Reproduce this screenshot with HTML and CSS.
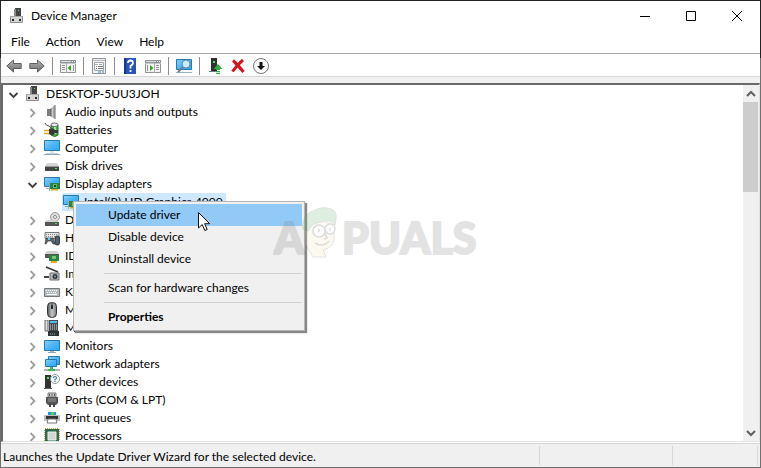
FILE: index.html
```html
<!DOCTYPE html>
<html lang="en">
<head>
<meta charset="UTF-8">
<meta name="viewport" content="width=device-width, initial-scale=1.0">
<title>Device Manager</title>
<link rel="stylesheet" href="styles.css">
</head>
<body>

<svg class="sprite" aria-hidden="true">
  <linearGradient id="blue" x1="0" y1="0" x2="1" y2="1"><stop offset="0" stop-color="#8ad2ff"/><stop offset=".5" stop-color="#4db5f8"/><stop offset="1" stop-color="#2fa2f0"/></linearGradient>
  <linearGradient id="metal" x1="0" y1="0" x2="1" y2="0"><stop offset="0" stop-color="#555"/><stop offset=".5" stop-color="#c4c8cb"/><stop offset="1" stop-color="#777"/></linearGradient>
  <linearGradient id="arrow" x1="0" y1="0" x2="0" y2="1"><stop offset="0" stop-color="#b5b5b5"/><stop offset="1" stop-color="#6c6c6c"/></linearGradient>
  <symbol id="open" viewBox="0 0 16 16"><path d="M4.500 7l4 4 4-4" fill="none" stroke="#404040" stroke-width="1.800"/></symbol>
  <symbol id="shut" viewBox="0 0 16 16"><path d="M6.500 5l4 4-4 4" fill="none" stroke="#a0a0a0" stroke-width="1.800"/></symbol>
  <symbol id="pc" viewBox="0 0 16 16"><path d="M6 0h6v9H6z" fill="#444"/><path d="M5 1h2v8H5z" fill="#888"/><path d="M9 2h1v1H9z" fill="#3f6"/><path d="M1.500 8.500h12v6h-12z" fill="#d6d6d6" stroke="#8c8c8c"/><path d="M1 8h13v1H1z" fill="#aaa"/><path d="M3 11h2v2H3zM10 11h2v2h-2z" fill="#222"/></symbol>
  <symbol id="speaker" viewBox="0 0 16 16"><path d="M3 5h3v7H3z" fill="#7a8083"/><path d="M6 5l5-4v14l-5-3z" fill="url(#metal)"/><path d="M11 1v14" stroke="#999" stroke-width="1.500"/></symbol>
  <symbol id="battery" viewBox="0 0 16 16"><path d="M7 3h7v10q-3 3-7 0z" fill="#42b549" stroke="#276b2c"/><ellipse cx="10.500" cy="2.800" rx="3.500" ry="1.800" fill="#e8eeee" stroke="#667"/><path d="M11 5v7" stroke="#9fea9c" stroke-width="2"/><path d="M1 1q1 3 4 3l3 3" fill="none" stroke="#555"/><path d="M5 7q4-2 6 1l3 0v3l-3 0q-2 4-6 1z" fill="#393939"/><path d="M0 8.500h5M0 11.500h5" stroke="#e6a51d" stroke-width="1.500"/></symbol>
  <symbol id="screen" viewBox="0 0 16 16"><path d="M.5 2.500h15v10H.5z" fill="url(#blue)" stroke="#2479ad"/><path d="M6 13h4v1H6z" fill="#a8b5bc"/><path d="M4 14.500h8" stroke="#8fa5b2"/></symbol>
  <symbol id="computer" viewBox="0 0 16 16"><path d="M.5.500h15v10H.5z" fill="url(#blue)" stroke="#2479ad"/><path d="M6 11h4v2H6z" fill="#dce5eb"/><path d="M0 14.500h16" stroke="#8ca5b8"/><path d="M2 13.500h12" stroke="#c8d5df"/></symbol>
  <symbol id="disk" viewBox="0 0 16 16"><path d="M3 5h10l2 3H1z" fill="#d6d6d6"/><path d="M1 8h14v5H1z" fill="#454545"/><path d="M1 8h14v1H1z" fill="#999"/><path d="M11 10h2v1h-2z" fill="#45ed60"/></symbol>
  <symbol id="display" viewBox="0 0 16 16"><path d="M.5 1.500h15v9H.5z" fill="url(#blue)" stroke="#2479ad"/><path d="M2 12.500h3" stroke="#8fa5b2"/><path d="M6 7h10v6H6z" fill="#298344"/><path d="M5.500 6v9" stroke="#9aa"/><path d="M9 8h4v4H9z" fill="#6ebb65"/><path d="M10 9h2v2h-2z" fill="#174924"/><path d="M7 13h7v1.500H7z" fill="#e2a82b"/></symbol>
  <symbol id="dvd" viewBox="0 0 16 16"><circle cx="11" cy="5" r="4.500" fill="#ddd" stroke="#9a9a9a"/><circle cx="11" cy="5" r="1.500" fill="#fff" stroke="#888"/><path d="M3 8h10l2 2H1z" fill="#d0d0d0"/><path d="M1 10h14v4H1z" fill="#555"/><path d="M11 11h2v1h-2z" fill="#3de357"/></symbol>
  <symbol id="hid" viewBox="0 0 16 16"><path d="M1 2.500h14v6H1z" fill="#e4e7e9" stroke="#777"/><path d="M2 4.500h12M2 6.500h12" stroke="#888" stroke-dasharray="1 1"/><path d="M1 14l1-6h7l2 6-2 0-2-3H4l-2 3z" fill="#56646f" stroke="#333" stroke-width=".6"/><path d="M4 8h2v2H4z" fill="#5ad1ff"/><rect x="11" y="6" width="4.500" height="9" rx="2" fill="#4c6070" stroke="#222" stroke-width=".8"/></symbol>
  <symbol id="ide" viewBox="0 0 16 16"><path d="M3 3h10l2 3H1z" fill="#d0d0d0"/><path d="M1 6h14v4H1z" fill="#555"/><path d="M5 7h10v6H5z" fill="#298344"/><path d="M8 8h4v3H8z" fill="#79c66d"/><path d="M7 13h6v2H7z" fill="#e2a82b"/></symbol>
  <symbol id="camera" viewBox="0 0 16 16"><path d="M2 1l12 5" stroke="#333" stroke-width="1.500"/><path d="M6 7h9v7H6z" fill="#b8bbbd" stroke="#6d6d6d"/><path d="M0 10h5v2H0z" fill="#444"/><circle cx="11" cy="10.500" r="2.500" fill="#2c343a"/><circle cx="11" cy="10.500" r="1" fill="#84a4b8"/></symbol>
  <symbol id="keyboard" viewBox="0 0 16 16"><path d="M.5 4.500h15v8H.5z" fill="#b4babd" stroke="#73797c"/><path d="M2 6.500h12M3 8.500h10" stroke="#fff" stroke-dasharray="1 1"/><path d="M3 10.500h10" stroke="#fff"/></symbol>
  <symbol id="mouse" viewBox="0 0 16 16"><rect x="3.500" y=".5" width="9" height="15" rx="4" fill="url(#metal)" stroke="#333"/><path d="M8 1v6" stroke="#23292f"/><rect x="7" y="3" width="2" height="4" rx="1" fill="#222"/></symbol>
  <symbol id="modem" viewBox="0 0 16 16"><path d="M1 0h3v11H1z" fill="#ddd" stroke="#666"/><path d="M5 0h9v12H5z" fill="#42484d"/><path d="M6 1h7v2H6z" fill="#50bdf5"/><path d="M6 5h7M6 7h7M6 9h7" stroke="#ddd" stroke-dasharray="1 1"/><path d="M4 11h11v5H4z" fill="#333"/><path d="M6 14h6" stroke="#5dcfd2" stroke-dasharray="1 1"/></symbol>
  <symbol id="network" viewBox="0 0 16 16"><path d="M4.500.500h11v8h-11z" fill="url(#blue)" stroke="#2479ad"/><path d="M1.500 3.500h11v7h-11z" fill="url(#blue)" stroke="#2479ad"/><path d="M0 14h16" stroke="#aeb6b9" stroke-width="2"/><path d="M6 11h3v2h2v2H4v-2h2z" fill="#42b954"/></symbol>
  <symbol id="other" viewBox="0 0 16 16"><path d="M1 1h6v14H1z" fill="#333"/><path d="M0 14h8v1H0z" fill="#666"/><path d="M3 3h2v2H3z" fill="#41f262"/><circle cx="11" cy="5" r="4.500" fill="#fff" stroke="#8a999f"/><path d="M9.500 4q0-1.500 1.500-1.500T12.500 4Q12.500 5 11 5.500v1M11 7v1" fill="none" stroke="#3978b2" stroke-width="1.200"/></symbol>
  <symbol id="port" viewBox="0 0 16 16"><path d="M4 1h8v4H4z" fill="#cfcfcf" stroke="#777"/><path d="M5.500 2v2M8 2v2M10.500 2v2" stroke="#555"/><path d="M2 5h12v6l-2 2H4l-2-2z" fill="#555"/><path d="M4 7h8M4 9h8" stroke="#999"/><path d="M5 12h2v3H5zM9 12h2v3H9z" fill="#444"/></symbol>
  <symbol id="printer" viewBox="0 0 16 16"><path d="M4 2h8v3H4z" fill="#2893e8"/><path d="M7 2h3v3H7z" fill="#5ac94a"/><path d="M0 5h16v6H0z" fill="#bbc0c3"/><path d="M2 6h12v3H2z" fill="#333"/><path d="M4 9h8l1 4H3z" fill="#fff" stroke="#777"/></symbol>
  <symbol id="cpu" viewBox="0 0 16 16"><path d="M1 1h14v14H1z" fill="none" stroke="#c9a437" stroke-width="2" stroke-dasharray="1 1"/><path d="M1 1h14v14H1z" fill="#2d6a51"/><path d="M4 4h8v8H4z" fill="#d2d5d2" stroke="#edf3ed"/></symbol>
  <symbol id="pane" viewBox="0 0 16 16"><path d="M.5 2.500h15v12H.5z" fill="#f3f3f3" stroke="#909498"/><path d="M0 2h16v3H0z" fill="#8e959a"/><path d="M1 3.500h10" stroke="#dce0e3"/><path d="M12 3.500h3" stroke="#fff" stroke-dasharray="1 1"/><path d="M0 5.500h16" stroke="#c3c7ca"/></symbol>
</svg>

<div class="titlebar">
  <svg class="icon"><use href="#pc"/></svg>
  <h1>Device Manager</h1>
  <button class="win-btn" aria-label="Minimize"><svg viewBox="0 0 10 10"><path d="M0 5.500h10"/></svg></button>
  <button class="win-btn" aria-label="Maximize"><svg viewBox="0 0 10 10"><path d="M.5.500h9v9h-9z"/></svg></button>
  <button class="win-btn" aria-label="Close"><svg viewBox="0 0 10 10"><path d="M0 0l10 10M10 0L0 10"/></svg></button>
</div>

<nav class="menubar">
  <button>File</button>
  <button>Action</button>
  <button>View</button>
  <button>Help</button>
</nav>

<div class="toolbar">
  <button aria-label="Back"><svg viewBox="0 0 16 16"><path d="M.8 8l6.700-6v3.500h7.700v5H7.500V14z" fill="url(#arrow)" stroke="#5e5e5e"/></svg></button>
  <button aria-label="Forward"><svg viewBox="0 0 16 16"><path d="M15.200 8l-6.700-6v3.500H.8v5h7.700V14z" fill="url(#arrow)" stroke="#5e5e5e"/></svg></button>
  <span class="sep"></span>
  <button aria-label="Show console tree"><svg viewBox="0 0 16 16"><use href="#pane"/><path d="M2 7.500h3M2 9.500h3M2 11.500h3M13.500 7v6" stroke="#8b9298"/><path d="M6.500 5v10" stroke="#a9aeb1"/><path d="M11 7v6L7.500 10z" fill="#35a526"/></svg></button>
  <span class="sep"></span>
  <button aria-label="Properties"><svg viewBox="0 0 16 16"><path d="M1.500.500h13v15h-13z" fill="#f3f3f3" stroke="#909498"/><path d="M2 2.500h12" stroke="#b4b9bd"/><path d="M3.500 4.500h9v8h-9z" fill="#fff" stroke="#9da4aa"/><path d="M4 6.500h8" stroke="#a6acb0" stroke-dasharray="3 1"/><path d="M5 8.500h1M7 8.500h5M5 10.500h1M7 10.500h5" stroke="#71797f"/><path d="M7 14h3M11 14h2" stroke="#3d8fc4"/></svg></button>
  <span class="sep"></span>
  <button aria-label="Help"><svg viewBox="0 0 16 16"><path d="M2 0h12v16H2z" fill="#2855b8"/><path d="M2 0h2v16H2z" fill="#18398a"/><path d="M6 5q0-2.500 2.500-2.500T11 5Q11 6.500 8.500 8v2.500M8.500 12v2" fill="none" stroke="#fff" stroke-width="1.800"/></svg></button>
  <button aria-label="Show action pane"><svg viewBox="0 0 16 16"><use href="#pane"/><path d="M2.500 7v6M11 7.500h3M11 9.500h3M11 11.500h3" stroke="#8b9298"/><path d="M9.500 5v10" stroke="#a9aeb1"/><path d="M5 7v6l3.500-3z" fill="#35a526"/></svg></button>
  <span class="sep"></span>
  <button aria-label="Scan for hardware changes"><svg viewBox="0 0 16 16"><path d="M.5 1.500h15v10H.5z" fill="url(#blue)" stroke="#2479ad"/><path d="M0 14.500h16" stroke="#9ab1c2"/><circle cx="10" cy="6" r="4" fill="#c9ebff" stroke="#6a8799"/><path d="M7 9l-5 5" stroke="#6a7f8c" stroke-width="2"/></svg></button>
  <span class="sep"></span>
  <button aria-label="Update driver"><svg viewBox="0 0 16 16"><path d="M4 0h6v13H4z" fill="#303030"/><path d="M2 13h8v1H2z" fill="#777"/><path d="M6 3h2v2H6z" fill="#46e761"/><path d="M11 6l4.500 5H13v1H9v-1H6.500zM9 13h4v1.200H9zM9 15h4v1H9z" fill="#2fae3e"/></svg></button>
  <button aria-label="Uninstall device"><svg viewBox="0 0 16 16"><path d="M3 2.500Q7 6 13.500 14M13 2Q7 7 2.500 13.500" fill="none" stroke="#d4141c" stroke-width="3"/></svg></button>
  <button aria-label="Disable device"><svg viewBox="0 0 16 16"><circle cx="8" cy="8" r="7.500" fill="#fff" stroke="#777"/><path d="M6.500 4h3v4H12l-4 4-4-4h2.500z" fill="#111"/></svg></button>
</div>

<div class="content">
  <ul class="tree">
    <li>
      <div class="row"><button aria-label="Collapse"><svg><use href="#open"/></svg></button><svg class="icon"><use href="#pc"/></svg><span>DESKTOP-5UU3JOH</span></div>
      <ul>
        <li class="row"><button aria-label="Expand"><svg><use href="#shut"/></svg></button><svg class="icon"><use href="#speaker"/></svg><span>Audio inputs and outputs</span></li>
        <li class="row"><button aria-label="Expand"><svg><use href="#shut"/></svg></button><svg class="icon"><use href="#battery"/></svg><span>Batteries</span></li>
        <li class="row"><button aria-label="Expand"><svg><use href="#shut"/></svg></button><svg class="icon"><use href="#computer"/></svg><span>Computer</span></li>
        <li class="row"><button aria-label="Expand"><svg><use href="#shut"/></svg></button><svg class="icon"><use href="#disk"/></svg><span>Disk drives</span></li>
        <li>
          <div class="row"><button aria-label="Collapse"><svg><use href="#open"/></svg></button><svg class="icon"><use href="#display"/></svg><span>Display adapters</span></div>
          <ul>
            <li class="row leaf"><div class="selected"><svg class="icon"><use href="#display"/></svg><span>Intel(R) HD Graphics 4000</span></div></li>
          </ul>
        </li>
        <li class="row"><button aria-label="Expand"><svg><use href="#shut"/></svg></button><svg class="icon"><use href="#dvd"/></svg><span>DVD/CD-ROM drives</span></li>
        <li class="row"><button aria-label="Expand"><svg><use href="#shut"/></svg></button><svg class="icon"><use href="#hid"/></svg><span>Human Interface Devices</span></li>
        <li class="row"><button aria-label="Expand"><svg><use href="#shut"/></svg></button><svg class="icon"><use href="#ide"/></svg><span>IDE ATA/ATAPI controllers</span></li>
        <li class="row"><button aria-label="Expand"><svg><use href="#shut"/></svg></button><svg class="icon"><use href="#camera"/></svg><span>Imaging devices</span></li>
        <li class="row"><button aria-label="Expand"><svg><use href="#shut"/></svg></button><svg class="icon"><use href="#keyboard"/></svg><span>Keyboards</span></li>
        <li class="row"><button aria-label="Expand"><svg><use href="#shut"/></svg></button><svg class="icon"><use href="#mouse"/></svg><span>Mice and other pointing devices</span></li>
        <li class="row"><button aria-label="Expand"><svg><use href="#shut"/></svg></button><svg class="icon"><use href="#modem"/></svg><span>Modems</span></li>
        <li class="row"><button aria-label="Expand"><svg><use href="#shut"/></svg></button><svg class="icon"><use href="#screen"/></svg><span>Monitors</span></li>
        <li class="row"><button aria-label="Expand"><svg><use href="#shut"/></svg></button><svg class="icon"><use href="#network"/></svg><span>Network adapters</span></li>
        <li class="row"><button aria-label="Expand"><svg><use href="#shut"/></svg></button><svg class="icon"><use href="#other"/></svg><span>Other devices</span></li>
        <li class="row"><button aria-label="Expand"><svg><use href="#shut"/></svg></button><svg class="icon"><use href="#port"/></svg><span>Ports (COM &amp; LPT)</span></li>
        <li class="row"><button aria-label="Expand"><svg><use href="#shut"/></svg></button><svg class="icon"><use href="#printer"/></svg><span>Print queues</span></li>
        <li class="row"><button aria-label="Expand"><svg><use href="#shut"/></svg></button><svg class="icon"><use href="#cpu"/></svg><span>Processors</span></li>
      </ul>
    </li>
  </ul>
  <div class="scrollbar">
    <button aria-label="Scroll up"><svg viewBox="0 0 16 16"><path d="M4 10l4-4 4 4"/></svg></button>
    <div class="thumb"></div>
    <button aria-label="Scroll down"><svg viewBox="0 0 16 16"><path d="M4 6l4 4 4-4"/></svg></button>
  </div>
</div>

<footer class="statusbar">
  <p>Launches the Update Driver Wizard for the selected device.</p>
  <span class="cell-wide"></span>
  <span class="cell"></span>
</footer>

<div class="context-menu" role="menu">
  <button class="active" role="menuitem">Update driver</button>
  <button role="menuitem">Disable device</button>
  <button role="menuitem">Uninstall device</button>
  <hr>
  <button role="menuitem">Scan for hardware changes</button>
  <hr>
  <button class="default" role="menuitem">Properties</button>
</div>

<svg class="watermark" viewBox="0 0 210 56">
  <g class="letters">
    <text x="1" y="51">A</text>
    <text x="69" y="51">PUALS</text>
  </g>
  <path d="M31 26q2 8 1 15l5 8 3 5h13l-3-7q9-2 11-10l0-15-15-6z" fill="#f5e3bd" stroke="#777"/>
  <path d="M30 26q-2-14 12-19 8-4 16-1 6 2 5 10l-1 6q-5-7-14-3-9 1-13 9z" fill="#5fb36d" stroke="#4c7955"/>
  <circle cx="46" cy="28" r="6" fill="#fff" stroke="#555" stroke-width="1.500"/>
  <circle cx="57" cy="26" r="5" fill="#fff" stroke="#555" stroke-width="1.500"/>
  <path d="M46 26v3M57 25v3M52 30l2 5-3 1M42 40q8 5 14-2" fill="none" stroke="#555" stroke-width="1.500"/>
</svg>

<svg class="cursor" viewBox="0 0 12 20"><path d="M.5.500v15.500l3.700-3.500 2.600 6 2.400-1-2.500-5.800h5z" fill="#fff" stroke="#111"/></svg>

</body>
</html>
```

FILE: styles.css
```css
* { box-sizing: border-box; }
body {
  margin: 0;
  padding: 1px;
  height: 100vh;
  display: flex;
  flex-direction: column;
  position: relative;
  overflow: hidden;
  background: linear-gradient(#222 58px, #707070 58px);
  color: #000;
  font: 12px/18px Lato, "Open Sans", sans-serif;
}
button { margin: 0; padding: 0; border: none; background: none; color: inherit; font: inherit; }
svg { display: block; flex: none; }
ul { margin: 0; padding: 0; list-style: none; }
.sprite { position: absolute; width: 0; height: 0; }
.icon { width: 16px; height: 16px; }

.titlebar { display: flex; align-items: center; height: 29px; padding-left: 8px; background: #fff; }
.titlebar h1 { flex: 1; margin: 0 0 0 6px; font-size: 12px; font-weight: 400; }
.win-btn { width: 46px; height: 29px; display: flex; align-items: center; justify-content: center; }
.win-btn svg { width: 10px; height: 10px; fill: none; stroke: #000; }

.menubar { display: flex; gap: 16px; height: 23px; padding: 0 10px; background: #fff; }

.toolbar { display: flex; align-items: center; height: 24px; padding: 2px 0 0 5px; gap: 7px; background: #fff; border-top: 1px solid #a8abb5; border-bottom: 1px solid #d5d5d5; }
.toolbar svg { width: 16px; height: 16px; }
.toolbar .sep { width: 1px; height: 18px; background: #8d8d8d; }

.content { flex: 1; min-height: 0; display: flex; margin-top: 6px; border: 1px solid #e3e3e3; border-top: 2px solid #696969; border-left: 2px solid #696969; background: #fff; box-shadow: 0 -6px #f0f0f0; }
.tree { flex: 1; min-width: 0; overflow: hidden; }
.tree ul .row { padding-left: 21px; }
.row { display: flex; align-items: center; height: 18px; padding-left: 2px; white-space: nowrap; }
.row button { width: 16px; height: 16px; margin-right: 4px; }
.row button svg { width: 16px; height: 16px; }
.row .icon { margin-right: 5px; }
.tree ul .leaf { padding-left: 59px; }
.selected { display: flex; align-items: center; height: 18px; padding: 0 3px 0 1px; background: #cde8ff; }

.scrollbar { display: flex; flex-direction: column; width: 16px; background: #f0f0f0; }
.scrollbar button { height: 17px; display: flex; align-items: center; justify-content: center; }
.scrollbar button:last-child { margin-top: auto; }
.scrollbar svg { width: 16px; height: 16px; fill: none; stroke: #606060; stroke-width: 2; }
.thumb { width: 15px; height: 90px; background: #cdcdcd; }

.statusbar { display: flex; height: 24px; padding: 2px; background: #f0f0f0; border-top: 1px solid #d7d7d7; box-shadow: 0 -1px #fff; margin-top: 1px; }
.statusbar p { flex: 1; margin: 0; line-height: 21px; border-right: 1px solid #d7d7d7; white-space: nowrap; }
.statusbar .cell-wide { width: 133px; border-right: 1px solid #d7d7d7; }
.statusbar .cell { width: 85px; border-right: 1px solid #d7d7d7; }

.context-menu { position: absolute; left: 73px; top: 201px; width: 232px; padding: 2px; background: #f0f0f0; border: 1px solid #b5b5b5; box-shadow: 2px 2px 1px #888; }
.context-menu button { display: block; width: 100%; height: 22px; padding-left: 32px; line-height: 22px; text-align: left; }
.context-menu .active { background: #91c9f7; }
.context-menu .default { font-weight: 700; }
.context-menu hr { height: 1px; margin: 3px 0 3px 28px; border: none; background: #d2d2d2; }

.watermark { position: absolute; left: 273px; top: 203px; width: 210px; height: 56px; opacity: 0.2; }
.letters { font: 900 43px Lato, sans-serif; fill: #777; stroke: #777; stroke-width: 2; stroke-linejoin: round; }
.cursor { position: absolute; left: 198px; top: 212px; width: 12px; height: 20px; }
```
